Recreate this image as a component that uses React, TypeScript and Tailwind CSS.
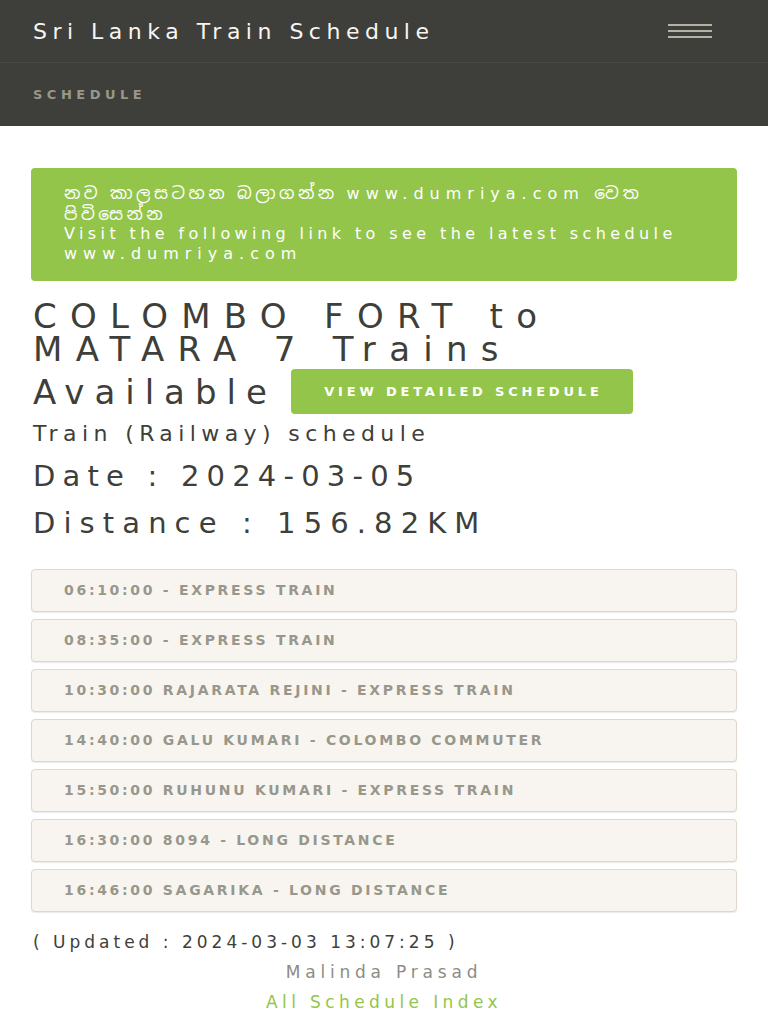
import React from 'react';

const trains = [
  '06:10:00 - EXPRESS TRAIN',
  '08:35:00 - EXPRESS TRAIN',
  '10:30:00 RAJARATA REJINI - EXPRESS TRAIN',
  '14:40:00 GALU KUMARI - COLOMBO COMMUTER',
  '15:50:00 RUHUNU KUMARI - EXPRESS TRAIN',
  '16:30:00 8094 - LONG DISTANCE',
  '16:46:00 SAGARIKA - LONG DISTANCE',
];

const font = "font-['DejaVu_Sans','Noto_Sans_Sinhala','Noto_Sans',sans-serif]";

const App: React.FC = () => {
  return (
    <div className={`min-h-screen bg-white ${font} text-[#3e3f3a]`}>
      {/* Navbar */}
      <header className="bg-[#3e3f3a]">
        <div className="flex h-[63px] items-center justify-between border-b border-[#4a4b46] pl-[33px] pr-[56px]">
          <span className="text-[22px] tracking-[5.5px] text-[#f8f5f0]">Sri Lanka Train Schedule</span>
          <button className="flex w-[44px] flex-col gap-[4px]" aria-label="menu">
            <span className="h-[2px] w-full bg-[#b3b2a5]" />
            <span className="h-[2px] w-full bg-[#b3b2a5]" />
            <span className="h-[2px] w-full bg-[#b3b2a5]" />
          </button>
        </div>
        <nav className="flex h-[63px] items-center pl-[33px]">
          <a className="text-[13px] font-bold uppercase tracking-[4.5px] text-[#98978b]">Schedule</a>
        </nav>
      </header>

      <main className="px-[31px] pt-[42px] pb-8">
        {/* Alert */}
        <div className="rounded-[4px] bg-[#93c54b] px-[33px] pt-[15px] pb-[18px] text-[16px] leading-[20px] text-white">
          <div className="h-[20px] whitespace-nowrap">
            <span className="text-[17px] tracking-[3.5px]">නව කාලසටහන බලාගන්න </span>
            <span className="tracking-[6px]">www.dumriya.com</span>
            <span className="text-[17px] tracking-[4px]"> වෙත</span>
          </div>
          <div className="h-[20px] pt-[1px]">
            <span className="text-[17px] tracking-[3.5px]">පිවිසෙන්න</span>
          </div>
          <p className="h-[20px] pt-[1px] tracking-[4.4px]">Visit the following link to see the latest schedule</p>
          <p className="h-[20px] pt-[1px] tracking-[6px]">www.dumriya.com</p>
        </div>

        {/* Heading */}
        <h1 className="mt-[19px] pl-[2px] text-[34px] leading-[33px] tracking-[13.3px]">
          COLOMBO FORT to
          <br />
          MATARA 7 Trains
        </h1>
        <div className="mt-[3px] flex items-center pl-[2px]">
          <span className="text-[34px] leading-[36px] tracking-[10px]">Available</span>
          <a className="ml-[14px] flex h-[45px] w-[342px] items-center justify-center rounded-[4px] bg-[#93c54b] pl-[3px] text-[13px] font-bold uppercase tracking-[3.8px] text-white">
            View Detailed Schedule
          </a>
        </div>

        <p className="mt-[7px] pl-[2px] text-[22px] leading-[26px] tracking-[5.4px]">Train (Railway) schedule</p>
        <p className="mt-[11px] pl-[2px] text-[29px] leading-[36px] tracking-[7.2px]">Date : 2024-03-05</p>
        <p className="mt-[11px] pl-[2px] text-[29px] leading-[36px] tracking-[8.1px]">Distance : 156.82KM</p>

        {/* Train list */}
        <ul className="mt-[28px] flex flex-col gap-[7px]">
          {trains.map((t, i) => (
            <li
              key={i}
              className="flex h-[43px] items-center rounded-[4px] border border-[#dfd7ca] bg-[#f8f5f0] pl-[32px] text-[14px] font-bold uppercase tracking-[2.7px] text-[#98978b] shadow-[0_1px_1px_rgba(0,0,0,0.08)]"
            >
              {t}
            </li>
          ))}
        </ul>

        <p className="mt-[18px] pl-[2px] text-[17px] leading-[24px] tracking-[4px]">( Updated : 2024-03-03 13:07:25 )</p>
        <p className="mt-[6px] text-center text-[17px] leading-[24px] tracking-[4.8px] text-[#8e8c84]">Malinda Prasad</p>
        <p className="mt-[6px] text-center text-[17px] leading-[24px] tracking-[4.4px] text-[#93c54b]">
          <a>All Schedule Index</a>
        </p>
      </main>
    </div>
  );
};

export default App;
